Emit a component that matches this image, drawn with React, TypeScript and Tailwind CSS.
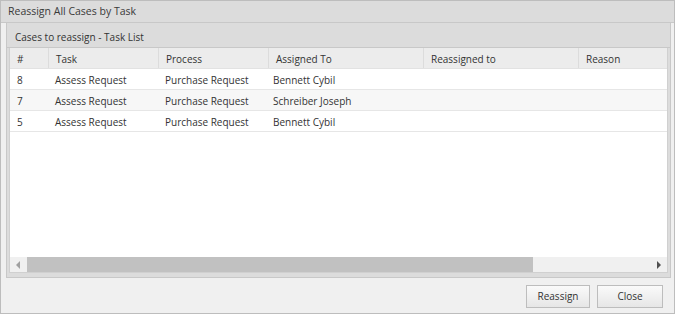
import React from "react";

const rows = [
  { n: "8", task: "Assess Request", proc: "Purchase Request", who: "Bennett Cybil" },
  { n: "7", task: "Assess Request", proc: "Purchase Request", who: "Schreiber Joseph" },
  { n: "5", task: "Assess Request", proc: "Purchase Request", who: "Bennett Cybil" },
];

const cols = [
  { label: "#", w: "w-[38px]" },
  { label: "Task", w: "w-[110px]" },
  { label: "Process", w: "w-[110px]" },
  { label: "Assigned To", w: "w-[155px]" },
  { label: "Reassigned to", w: "w-[155px]" },
  { label: "Reason", w: "w-[100px]" },
];

export default function App() {
  return (
    <div
      className="w-[675px] h-[314px] bg-[#f0f0f0] border border-[#bdbdbd] flex flex-col text-[10px] text-[#333]"
      style={{ fontFamily: '"Open Sans", Arial, sans-serif' }}
    >
      <div className="h-[22px] shrink-0 bg-[#dcdcdc] border-b border-[#c8c8c8] flex items-center pl-[7px] pt-[1px] text-[10.5px] text-[#3a3a3a]">
        Reassign All Cases by Task
      </div>
      <div className="flex-1 flex flex-col pl-[5px] pr-[3px]">
        <div className="h-[255px] flex flex-col border border-[#c8c8c8] bg-[#dcdcdc] border-t-0">
          <div className="h-[25px] shrink-0 flex items-center pl-[8px] pt-[4px] text-[#333] border-b border-[#c8c8c8]">
            Cases to reassign - Task List
          </div>
          <div className="flex-1 mx-[2px] mb-[4px] bg-white border border-[#d0d0d0] border-t-0 flex flex-col overflow-hidden">
            <div className="flex-1 overflow-hidden">
              <div className="flex h-[21px] bg-[#ececec] border-b border-[#e2e2e2]">
                {cols.map((c, i) => (
                  <div
                    key={c.label}
                    className={`${c.w} shrink-0 flex items-center pl-[7px] pt-[3px] ${i > 0 ? "border-l border-[#dcdcdc]" : ""}`}
                  >
                    {c.label}
                  </div>
                ))}
              </div>
              {rows.map((r, idx) => (
                <div
                  key={idx}
                  className={`flex h-[21px] border-b border-[#e6e6e6] ${idx % 2 === 1 ? "bg-[#f7f7f7]" : "bg-white"}`}
                >
                  <div className="w-[38px] shrink-0 flex items-center pl-[7px] pt-[3px]">{r.n}</div>
                  <div className="w-[110px] shrink-0 flex items-center pl-[7px] pt-[3px]">{r.task}</div>
                  <div className="w-[110px] shrink-0 flex items-center pl-[7px] pt-[3px]">{r.proc}</div>
                  <div className="w-[155px] shrink-0 flex items-center pl-[5px] pt-[3px]">{r.who}</div>
                  <div className="w-[155px] shrink-0" />
                  <div className="w-[100px] shrink-0" />
                </div>
              ))}
            </div>
            <div className="h-[15px] shrink-0 bg-[#f0f0f0] flex items-center">
              <div className="w-[17px] h-full flex items-center justify-center">
                <svg width="5" height="8" viewBox="0 0 5 8"><path d="M4 0 L0 4 L4 8 Z" fill="#a0a0a0" /></svg>
              </div>
              <div className="w-[506px] h-[15px] bg-[#c1c1c1]" />
              <div className="flex-1" />
              <div className="w-[17px] h-full flex items-center justify-center">
                <svg width="5" height="8" viewBox="0 0 5 8"><path d="M1 0 L5 4 L1 8 Z" fill="#505050" /></svg>
              </div>
            </div>
          </div>
        </div>
      </div>
      <div className="h-[34px] shrink-0 flex items-center justify-end gap-[7px] pr-[11px]">
        <button className="w-[64px] h-[23px] border border-[#bdbdbd] bg-gradient-to-b from-[#fafafa] to-[#e6e6e6] text-[#333] text-[10px] pt-[1px]">
          Reassign
        </button>
        <button className="w-[66px] h-[23px] border border-[#bdbdbd] bg-gradient-to-b from-[#fafafa] to-[#e6e6e6] text-[#333] text-[10px] pt-[1px]">
          Close
        </button>
      </div>
    </div>
  );
}
